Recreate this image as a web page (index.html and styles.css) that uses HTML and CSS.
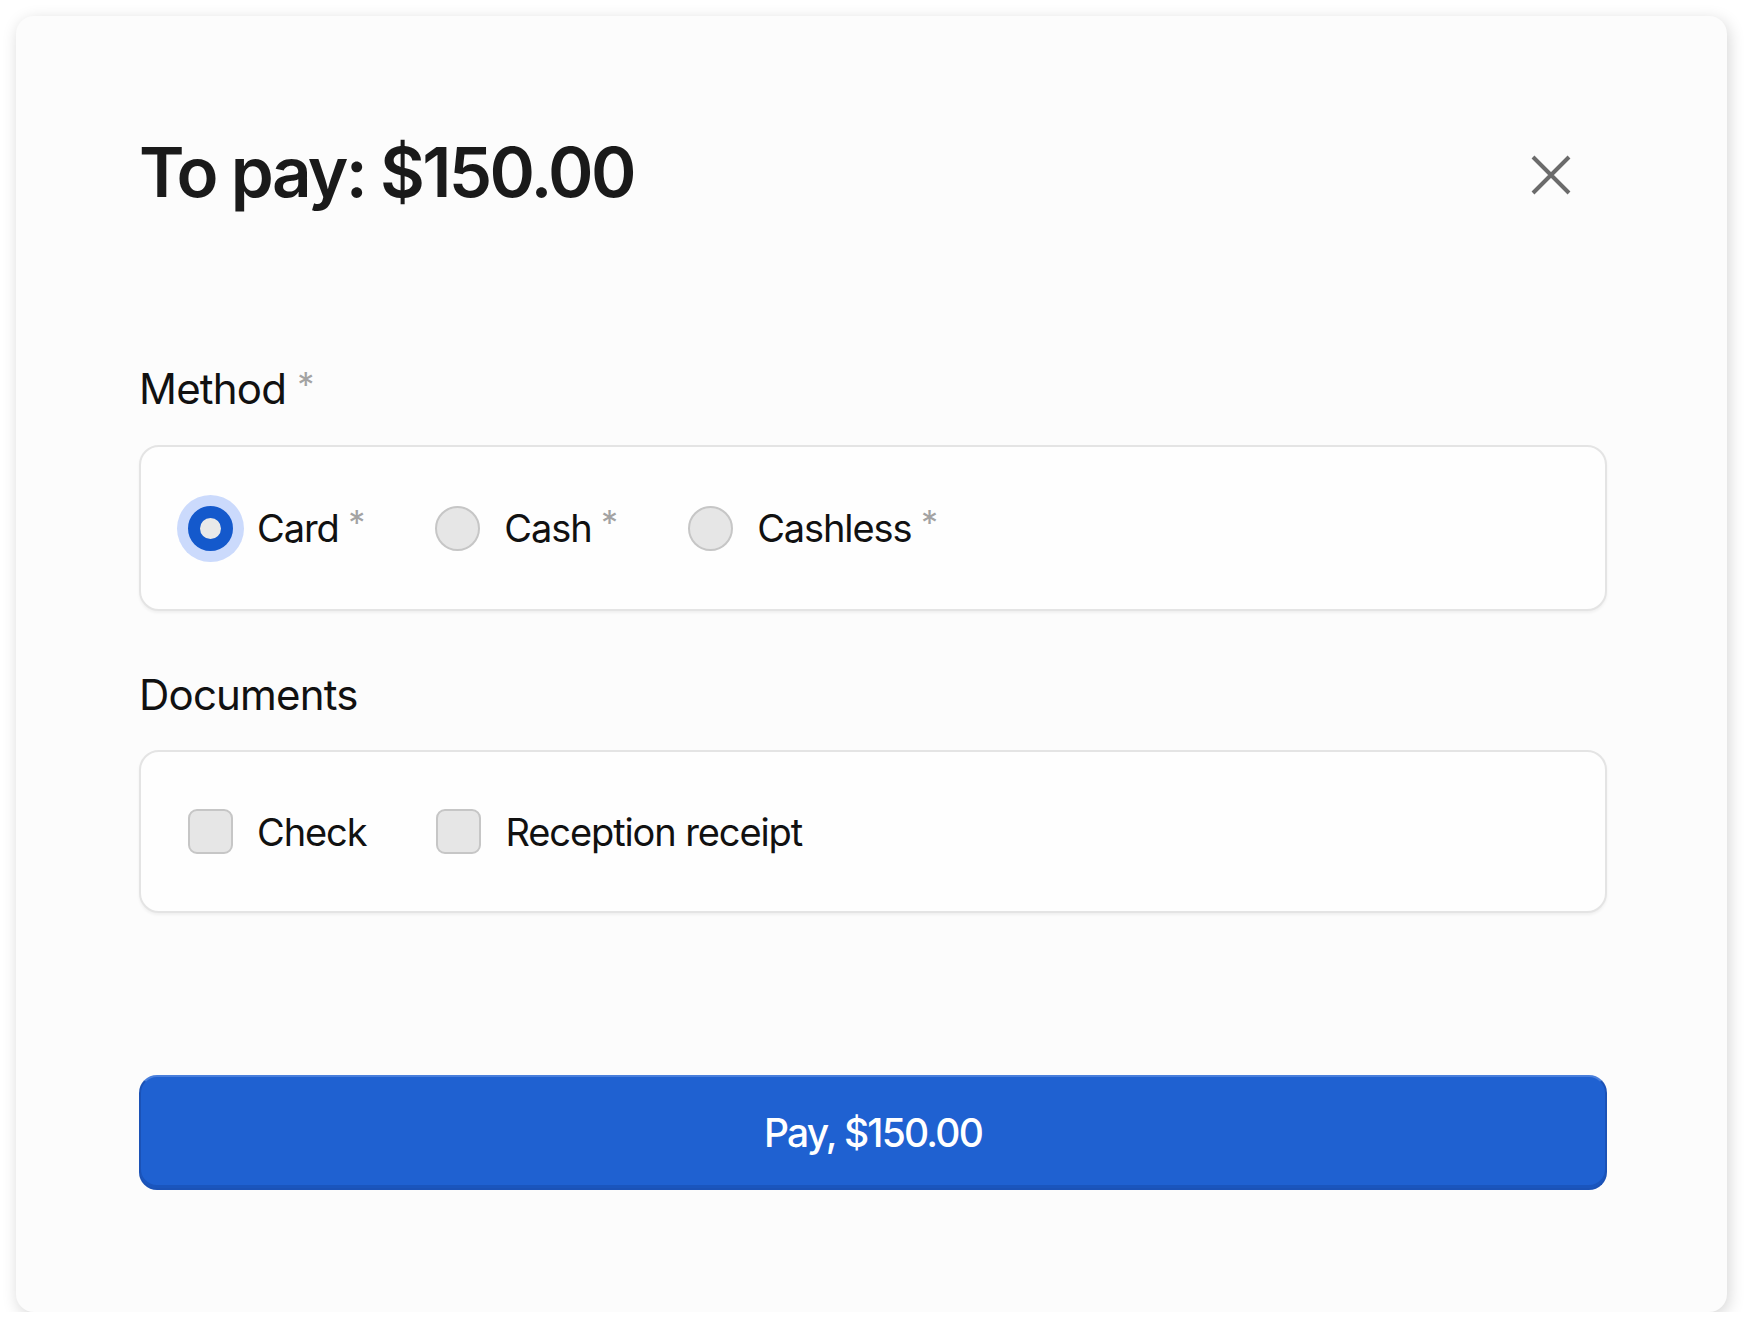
FILE: index.html
```html
<!DOCTYPE html>
<html lang="en">
<head>
<meta charset="utf-8">
<title>To pay</title>
<link rel="stylesheet" href="styles.css">
</head>
<body>
<div class="modal">
  <div class="header">
    <h1 class="title">To pay: $150.00</h1>
    <button class="close" aria-label="Close">
      <svg width="40" height="40" viewBox="0 0 40 40"><path d="M2 2 L38 38 M38 2 L2 38" stroke="#6b6b6b" stroke-width="4" fill="none"/></svg>
    </button>
  </div>

  <div class="field method">
    <div class="label">Method <span class="req">*</span></div>
    <div class="group">
      <label class="opt"><span class="radio checked"></span><span class="text">Card <span class="req">*</span></span></label>
      <label class="opt"><span class="radio"></span><span class="text">Cash <span class="req">*</span></span></label>
      <label class="opt"><span class="radio"></span><span class="text">Cashless <span class="req">*</span></span></label>
    </div>
  </div>

  <div class="field docs">
    <div class="label">Documents</div>
    <div class="group">
      <label class="opt"><span class="check"></span><span class="text">Check</span></label>
      <label class="opt"><span class="check"></span><span class="text">Reception receipt</span></label>
    </div>
  </div>

  <button class="pay">Pay, $150.00</button>
</div>
</body>
</html>
```

FILE: styles.css
```css
html, body {
  margin: 0;
  padding: 0;
  background: #ffffff;
}
body {
  font-family: Inter, "Noto Sans", "Liberation Sans", sans-serif;
  color: #141414;
}
.modal {
  box-sizing: border-box;
  margin: 16px 0 0 16px;
  width: 1711px;
  height: 1296px;
  background: #fcfcfc;
  border-radius: 18px;
  box-shadow: 2px 4px 16px rgba(0, 0, 0, 0.17);
  padding: 114px 120px 0 123px;
  display: flex;
  flex-direction: column;
}
.header {
  display: flex;
  align-items: center;
  justify-content: space-between;
  height: 84px;
}
.title {
  margin: 0;
  font-size: 69px;
  line-height: 84px;
  font-weight: 600;
  letter-spacing: -2.6px;
  color: #1a1a1a;
}
.close {
  border: 0;
  background: none;
  padding: 0;
  margin: 6px 36px 0 0;
  width: 40px;
  height: 40px;
  display: block;
}
.close svg { display: block; }
.field {
  display: flex;
  flex-direction: column;
}
.method { margin-top: 150px; }
.docs { margin-top: 59px; }
.label {
  font-size: 42px;
  line-height: 50px;
  height: 50px;
  font-weight: 400;
  letter-spacing: -0.8px;
  color: #111;
}
.req {
  color: #a3a3a3;
  font-size: 34px;
  line-height: 0;
  vertical-align: 7px;
  letter-spacing: 0;
}
.group {
  margin-top: 31px;
  box-sizing: border-box;
  height: 166px;
  background: #fefefe;
  border: 2px solid #e4e4e4;
  border-radius: 20px;
  box-shadow: 0 2px 3px rgba(0, 0, 0, 0.05);
  display: flex;
  align-items: center;
  padding-left: 47px;
  gap: 70px;
}
.docs .group { height: 163px; margin-top: 30px; }
.opt {
  display: flex;
  align-items: center;
  gap: 24px;
}
.text {
  font-size: 38px;
  line-height: 46px;
  height: 46px;
  letter-spacing: -1.1px;
  color: #111;
}
.radio {
  box-sizing: border-box;
  width: 45px;
  height: 45px;
  border-radius: 50%;
  background: #e6e6e6;
  border: 2px solid #c6c6c6;
  flex: none;
}
.radio.checked {
  background: #e9e9e9;
  border: 12px solid #1459cc;
  box-shadow: 0 0 0 11px #cbdafc;
}
.check {
  box-sizing: border-box;
  width: 45px;
  height: 45px;
  border-radius: 9px;
  background: #e6e6e6;
  border: 2px solid #c6c6c6;
  flex: none;
}
.pay {
  margin-top: 162px;
  box-sizing: border-box;
  height: 115px;
  width: 100%;
  border-radius: 18px;
  background: #1f61d1;
  border: 2px solid #1b52b6;
  border-top-color: #4a7fdc;
  box-shadow: inset 0 -3px 0 #1a55bd;
  color: #ffffff;
  font-family: Inter, "Noto Sans", "Liberation Sans", sans-serif;
  font-size: 39px;
  font-weight: 500;
  letter-spacing: -1.8px;
}
```
